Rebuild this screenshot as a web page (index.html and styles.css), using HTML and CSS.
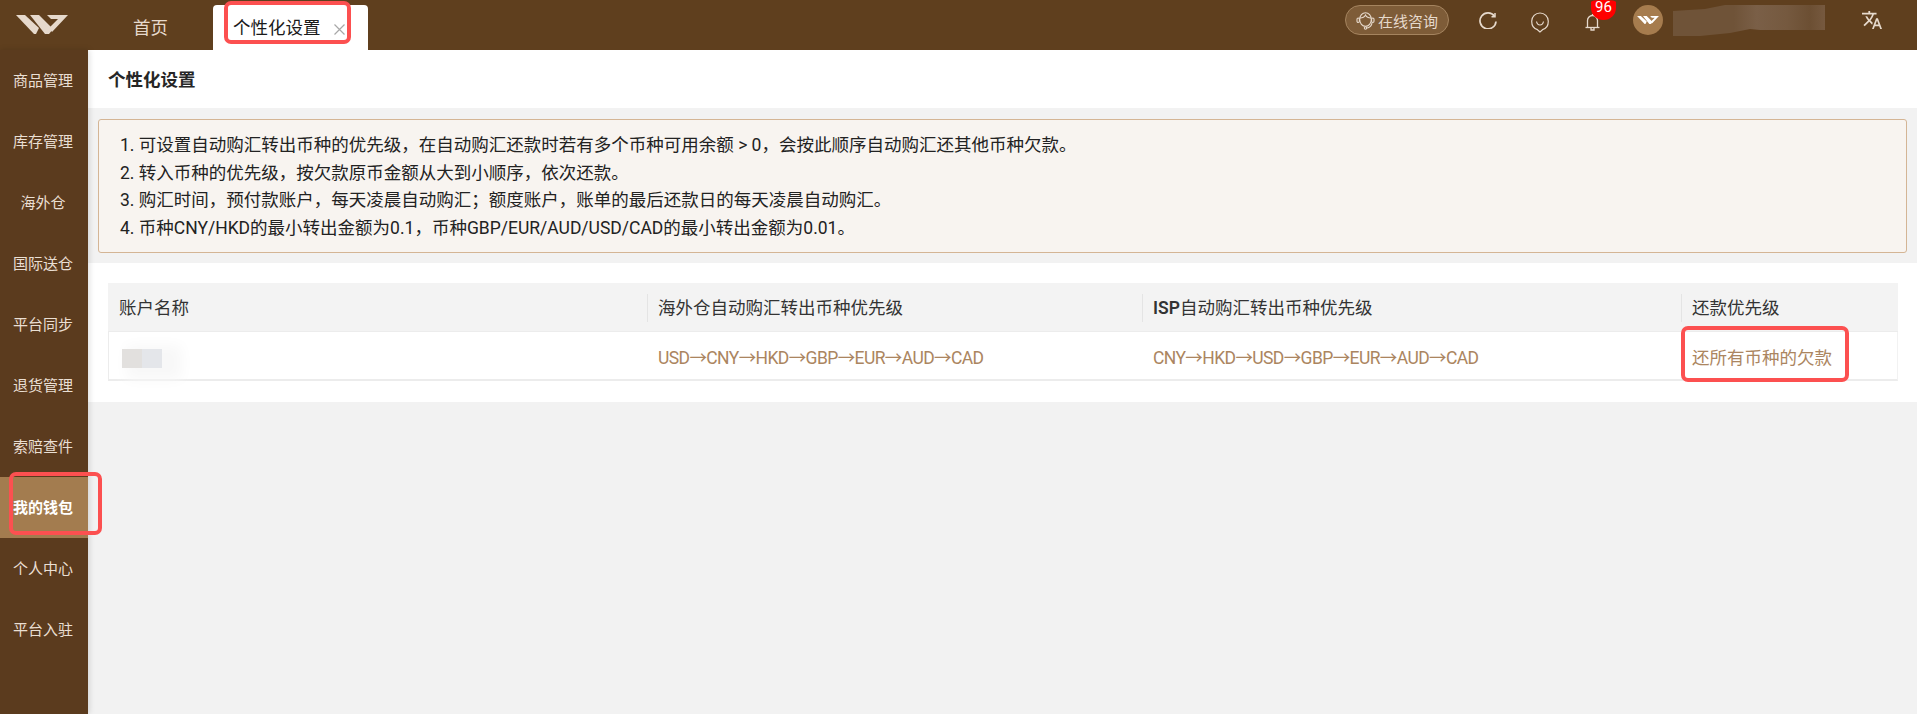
FILE: index.html
```html
<!DOCTYPE html>
<html lang="zh-CN">
<head>
<meta charset="utf-8">
<title>个性化设置</title>
<link rel="stylesheet" href="styles.css">
</head>
<body>
<div class="app">
  <header class="topbar">
    <div class="logo">
      <svg width="52" height="19" viewBox="0 0 52 19" fill="#e6d9cc"><polygon points="0,0 9,0 23,13 20,19 18,19"/><polygon points="14,0 23,0 37,14 33,19 29,19"/><polygon points="31,0 52,0 36,17 33,13 42,4 35,4"/></svg>
    </div>
    <nav class="tabs">
      <a class="tab-home">首页</a>
      <a class="tab-active">个性化设置
        <svg class="tab-close" width="11" height="11" viewBox="0 0 11 11" fill="none" stroke="#a8a8a8" stroke-width="1.2"><path d="M.5.5l10 10M10.5.5l-10 10"/></svg>
      </a>
    </nav>
    <div class="tools">
      <div class="consult">
        <svg width="19" height="19" viewBox="0 0 19 19" fill="none" stroke="#e6d9cc" stroke-width="1.1"><ellipse cx="9.5" cy="8.5" rx="5.8" ry="6.8"/><path d="M4 7c2.500 0 4.500-1 5.500-3 1 2 3 3 5.500 3"/><rect x="1" y="7" width="2.400" height="4.500" rx="1.200"/><rect x="15.600" y="7" width="2.400" height="4.500" rx="1.200"/><path d="M16 11.500c0 3-2.500 5.500-5 5.500"/><circle cx="9.500" cy="17" r="1.200"/></svg>
        <span>在线咨询</span>
      </div>
      <svg class="tool-refresh" width="18" height="18" viewBox="0 0 18 18" fill="none" stroke="#e6d9cc" stroke-width="1.700"><path d="M15.500 5.200A8 8 0 1 0 17 10.500"/><path d="M12.500 5.800H16V2" stroke-width="1.500"/></svg>
      <svg class="tool-smile" width="18" height="21" viewBox="0 0 18 21" fill="none" stroke="#e6d9cc" stroke-width="1.200"><path d="M9 20l-2.500-2.300C3 16.800.7 13.700.7 9.300a8.300 8.300 0 0 1 16.600 0c0 4.400-2.300 7.500-5.800 8.400z"/><path d="M5.500 9.500c.5 2.500 2 3.500 3.500 3.500s3-1 3.500-3.500"/></svg>
      <div class="bell">
        <svg width="15" height="18" viewBox="0 0 15 18" fill="none" stroke="#e6d9cc" stroke-width="1.300"><path d="M2.500 14V7.500a5 5 0 0 1 10 0V14"/><path d="M.5 14.500h14"/><path d="M6 15v2h3v-2"/><path d="M7.500 1v1.500"/></svg>
        <span class="badge">96</span>
      </div>
      <div class="avatar">
        <svg width="22" height="8" viewBox="0 0 52 19" fill="#fff"><polygon points="0,0 9,0 23,13 20,19 18,19"/><polygon points="14,0 23,0 37,14 33,19 29,19"/><polygon points="31,0 52,0 36,17 33,13 42,4 35,4"/></svg>
      </div>
      <div class="user-blur"></div>
      <svg class="tool-lang" width="20" height="20" viewBox="1 2 22 20" fill="#e6d9cc"><path d="M12.870 15.070l-2.540-2.510.03-.03c1.740-1.940 2.980-4.170 3.710-6.530H17V4h-7V2H8v2H1v1.990h11.170C11.500 7.920 10.440 9.750 9 11.350 8.070 10.320 7.300 9.190 6.690 8h-2c.73 1.630 1.730 3.170 2.980 4.560l-5.090 5.020L4 19l5-5 3.110 3.110.76-2.040zM18.500 10h-2L12 22h2l1.120-3h4.750L21 22h2l-4.500-12zm-2.620 7l1.620-4.330L19.120 17h-3.240z"/></svg>
    </div>
  </header>
  <div class="body">
    <aside class="sidebar">
      <a class="side-item">商品管理</a>
      <a class="side-item">库存管理</a>
      <a class="side-item">海外仓</a>
      <a class="side-item">国际送仓</a>
      <a class="side-item">平台同步</a>
      <a class="side-item">退货管理</a>
      <a class="side-item">索赔查件</a>
      <a class="side-item side-active">我的钱包</a>
      <a class="side-item">个人中心</a>
      <a class="side-item">平台入驻</a>
    </aside>
    <main class="main">
      <h1 class="page-title">个性化设置</h1>
      <section class="notice">
        <p>1. 可设置自动购汇转出币种的优先级，在自动购汇还款时若有多个币种可用余额 &gt; 0，会按此顺序自动购汇还其他币种欠款。</p>
        <p>2. 转入币种的优先级，按欠款原币金额从大到小顺序，依次还款。</p>
        <p>3. 购汇时间，预付款账户，每天凌晨自动购汇；额度账户，账单的最后还款日的每天凌晨自动购汇。</p>
        <p>4. 币种CNY/HKD的最小转出金额为0.1，币种GBP/EUR/AUD/USD/CAD的最小转出金额为0.01。</p>
      </section>
      <section class="panel">
        <div class="table">
          <div class="th first">账户名称</div>
          <div class="th">海外仓自动购汇转出币种优先级</div>
          <div class="th"><b class="isp">ISP</b>自动购汇转出币种优先级</div>
          <div class="th">还款优先级</div>
          <div class="td first"><span class="acct-blur"><i></i><i class="alt"></i></span></div>
          <div class="td route">USD→CNY→HKD→GBP→EUR→AUD→CAD</div>
          <div class="td route">CNY→HKD→USD→GBP→EUR→AUD→CAD</div>
          <div class="td">还所有币种的欠款</div>
        </div>
      </section>
    </main>
  </div>
  <div class="mark mark-tab"></div>
  <div class="mark mark-side"></div>
  <div class="mark mark-cell"></div>
</div>
</body>
</html>
```

FILE: styles.css
```css
* { box-sizing: border-box; }
html, body { margin: 0; padding: 0; height: 100%; overflow: hidden; }
body {
  font-family: Roboto, "Noto Sans CJK SC", sans-serif;
  font-size: 17.5px;
  color: #2b2b2b;
  background: #f2f2f2;
}
.app { position: relative; display: flex; flex-direction: column; height: 100vh; }

.topbar { display: flex; height: 50px; background: #5f3f1e; flex: none; }
.logo { width: 88px; flex: none; padding: 15px 0 0 16px; }
.logo svg { display: block; }
.tabs { display: flex; align-items: flex-end; flex: none; }
.tab-home {
  width: 125px; height: 45px; display: flex; align-items: center; justify-content: center;
  color: #e6d9cc; font-size: 17.5px; padding-bottom: 3px;
}
.tab-active {
  width: 155px; height: 45px; background: #fff; border-radius: 4px 4px 0 0;
  display: flex; align-items: center; padding: 0 0 3px 20px; color: #1a1a1a; font-size: 17.5px;
}
.tab-close { margin: 6px 0 0 13px; }
.tools { margin-left: auto; display: flex; align-items: center; height: 44px; padding: 0 35px 4px 0; }
.consult {
  width: 104px; height: 30px; border: 1px solid #a5845f; border-radius: 15px; background: #7e5c38;
  display: flex; align-items: center; justify-content: center; gap: 3px;
  color: #e6d9cc; font-size: 15px; white-space: nowrap;
}
.tool-refresh { margin-left: 30px; }
.tool-smile { margin-left: 34px; margin-top: 5px; }
.bell { position: relative; margin: 4px 0 0 36px; height: 18px; width: 15px; }
.bell svg { display: block; }
.badge {
  position: absolute; left: 6px; top: -13px; width: 25px; height: 19.5px;
  border-radius: 10px 10px 12.5px 12.5px / 2px 2px 12px 12px;
  background: #ff0000; color: #fff; font-size: 15px; line-height: 14px; text-align: center;
}
.avatar {
  margin-left: 33px; width: 30px; height: 30px; border-radius: 50%; background: #a67c4e;
  display: flex; align-items: center; justify-content: center;
}
.user-blur {
  margin-left: 10px; width: 152px; height: 32px;
  background: linear-gradient(90deg, #6f5338 0, #6f5338 40%, #7a5f47 55%, #75593f 75%, #6c4f33 90%, #76593f 100%);
  clip-path: polygon(0 7px, 32px 5px, 52px 1px, 152px 1px, 152px 26px, 87px 26px, 77px 25px, 57px 29px, 27px 32px, 0 32px);
}
.tool-lang { margin-left: 37px; }

.body { display: flex; flex: 1; min-height: 0; }
.sidebar {
  position: relative; z-index: 1; width: 88px; flex: none; background: #5b3b1e;
  box-shadow: 1px 0 6px rgba(0, 0, 0, .15);
}
.side-item {
  display: flex; align-items: center; justify-content: center; height: 61px;
  color: #eadfd3; font-size: 15px; white-space: nowrap; padding: 0 2px 2px 0;
}
.side-active { background: #a37c4f; color: #fff; font-weight: 700; }

.main { flex: 1; min-width: 0; }
.page-title {
  margin: 0; height: 58px; background: #fff; padding: 0 0 2px 20px;
  display: flex; align-items: center; font-size: 17.5px; font-weight: 700; color: #262626;
}
.notice {
  margin: 11px 10px 10px 10px; height: 134px; padding: 12px 20px 0 21px;
  background: #f8f4f0; border: 1px solid #d4b595; border-radius: 3px; color: #222;
}
.notice p { margin: 0; line-height: 27.7px; white-space: nowrap; }
.panel { background: #fff; height: 139px; padding: 20px 19px 0 20px; }
.table { display: grid; grid-template-columns: 539px 495px 539px 217px; }
.th {
  position: relative; height: 49px; background: #f3f3f3; padding-left: 11px; line-height: 50px;
  border-bottom: 1px solid #ececec; color: #333; white-space: nowrap;
}
.th:not(.first)::before {
  content: ""; position: absolute; left: 0; top: 11px; height: 28px; width: 1px; background: #e4e4e4;
}
.isp { font-weight: 600; }
.td {
  height: 49px; line-height: 53px; padding-left: 11px; color: #ab8560; white-space: nowrap;
  border-bottom: 2px solid #ececec;
}
.route { letter-spacing: -.6px; }
.td.first { border-left: 1px solid #ececec; line-height: 50px; }
.td:last-child { border-right: 1px solid #f2f2f2; }
.acct-blur { display: inline-flex; vertical-align: middle; margin: 0 0 0 2px; box-shadow: 12px 4px 14px 8px #f8f8f8; }
.acct-blur i { display: block; width: 20px; height: 19px; background: #e2e0de; }
.acct-blur .alt { background: #e4e6ea; }

.mark { position: absolute; border: 4px solid #fc5050; border-radius: 7px; pointer-events: none; z-index: 5; }
.mark-tab { left: 224px; top: 1px; width: 127px; height: 43px; }
.mark-side { left: 9px; top: 472px; width: 93px; height: 63px; }
.mark-cell { left: 1681px; top: 326px; width: 168px; height: 56px; }
```
